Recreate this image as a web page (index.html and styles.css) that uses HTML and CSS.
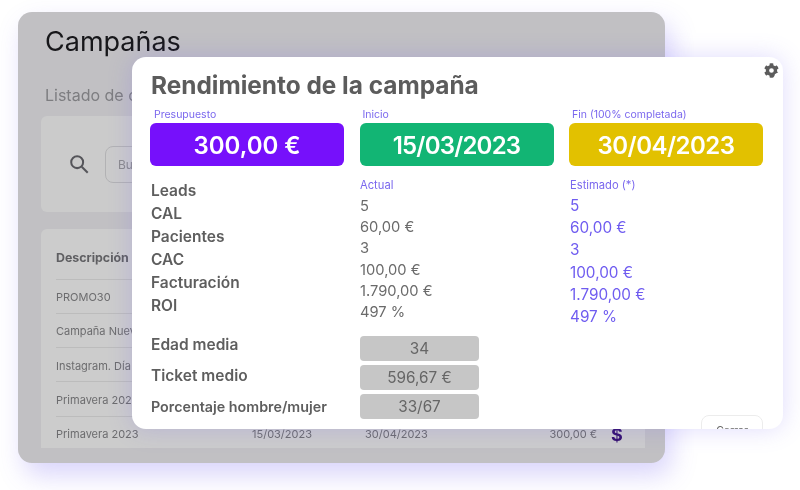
FILE: index.html
```html
<!DOCTYPE html>
<html lang="es">
<head>
<meta charset="utf-8">
<title>Campañas</title>
<link rel="stylesheet" href="styles.css">
</head>
<body>
<main class="stage">
  <section class="window">
    <h1 class="page-title">Campañas</h1>
    <p class="page-sub">Listado de campañas</p>
    <div class="search-card">
      <svg class="search-icon" viewBox="0 0 24 24" aria-hidden="true"><circle cx="10" cy="10" r="6.5"/><path d="M15 15l6.5 6.5"/></svg>
      <div class="search-input">Buscar</div>
    </div>
    <div class="table-card">
      <div class="row head"><span class="c-desc">Descripción</span></div>
      <div class="row"><span class="c-desc">PROMO30</span></div>
      <div class="row"><span class="c-desc">Campaña Nueva</span></div>
      <div class="row"><span class="c-desc">Instagram. Día</span></div>
      <div class="row"><span class="c-desc">Primavera 2023</span></div>
      <div class="row">
        <span class="c-desc">Primavera 2023</span>
        <span class="c-start">15/03/2023</span>
        <span class="c-end">30/04/2023</span>
        <span class="c-amount">300,00 €</span>
        <span class="c-icon">$</span>
      </div>
    </div>
  </section>

  <section class="modal">
    <svg class="gear" viewBox="0 0 512 512" aria-hidden="true"><path d="M487 316l-43-25a195 195 0 0 0 0-70l43-25c5-3 7-9 6-14-11-36-30-68-55-95-4-4-10-5-15-2l-43 25a190 190 0 0 0-61-35V25c0-6-4-11-9-12-37-8-75-8-110 0-5 1-9 6-9 12v50a196 196 0 0 0-61 35L87 85c-5-3-11-2-15 2-25 27-44 59-55 95-2 5 1 11 6 14l43 25a195 195 0 0 0 0 70l-43 25c-5 3-7 9-6 14 11 36 30 68 55 95 4 4 10 5 15 2l43-25a190 190 0 0 0 61 35v50c0 6 4 11 9 12 37 8 75 8 110 0 5-1 9-6 9-12v-50a196 196 0 0 0-61 35l43 25c5 3 11 2 15-2 25-27 44-59 55-95 2-5-1-11-6-14zM255 336a80 80 0 1 1 0-160 80 80 0 0 1 0 160z"/></svg>
    <h2 class="modal-title">Rendimiento de la campaña</h2>
    <div class="stats">
      <div class="stat">
        <div class="stat-label l1">Presupuesto</div>
        <div class="stat-box purple">300,00 €</div>
      </div>
      <div class="stat">
        <div class="stat-label l2">Inicio</div>
        <div class="stat-box green">15/03/2023</div>
      </div>
      <div class="stat">
        <div class="stat-label l3">Fin (100% completada)</div>
        <div class="stat-box yellow">30/04/2023</div>
      </div>
    </div>
    <div class="metrics">
      <ul class="names">
        <li>Leads</li><li>CAL</li><li>Pacientes</li><li>CAC</li><li>Facturación</li><li>ROI</li>
      </ul>
      <div class="col">
        <div class="col-label">Actual</div>
        <ul class="actual">
          <li>5</li><li>60,00 €</li><li>3</li><li>100,00 €</li><li>1.790,00 €</li><li>497 %</li>
        </ul>
      </div>
      <div class="col col-est">
        <div class="col-label">Estimado (*)</div>
        <ul class="estimated">
          <li>5</li><li>60,00 €</li><li>3</li><li>100,00 €</li><li>1.790,00 €</li><li>497 %</li>
        </ul>
      </div>
    </div>
    <div class="extras">
      <ul class="extra-names">
        <li>Edad media</li>
        <li>Ticket medio</li>
        <li class="small">Porcentaje hombre/mujer</li>
      </ul>
      <ul class="extra-values">
        <li>34</li>
        <li>596,67 €</li>
        <li>33/67</li>
      </ul>
    </div>
    <div class="footer"><button class="close" type="button">Cerrar</button></div>
  </section>
</main>
</body>
</html>
```
FILE: styles.css
```css
* { box-sizing: border-box; }
html, body { margin: 0; padding: 0; background: #fff; }
body { font-family: Inter, "Noto Sans", sans-serif; width: 800px; height: 490px; overflow: hidden; }
ul { list-style: none; margin: 0; padding: 0; }
h1, h2, p { margin: 0; }

.stage { position: relative; width: 800px; height: 490px; padding: 12px 0 0 18px; filter: blur(.3px); }

.window {
  width: 647px; height: 451px;
  background: #c1c0c3; border-radius: 14px;
  padding: 13px 23px 0;
  box-shadow: 6px 12px 26px rgba(110, 90, 240, .26);
  overflow: hidden;
}
.page-title { font-size: 27px; font-weight: 400; line-height: 34px; color: #17171a; padding-left: 4px; }
.page-sub { font-size: 16px; line-height: 22px; margin-top: 25px; padding-left: 4px; color: #7d7d80; white-space: nowrap; }

.search-card {
  height: 96px; margin-top: 10px; border-radius: 6px; background: #cbcbcb;
  display: flex; align-items: center; padding: 0 0 0 27px;
}
.search-icon { width: 22px; height: 22px; fill: none; stroke: #55555a; stroke-width: 2.2; }
.search-input {
  margin-left: 15px; width: 200px; height: 37px; border: 1px solid #b2b2b4; border-radius: 8px;
  font-size: 12px; line-height: 35px; padding-left: 12px; color: #8a8a8c;
}

.table-card {
  height: 219px; margin-top: 17px; background: #cccccc; border-radius: 6px 6px 0 0;
  padding: 0 15px; width: 604px; font-size: 11px; color: #6c6c6e;
}
.row { display: flex; align-items: center; height: 34.25px; padding-top: 2px; border-top: 1px solid #bcbcbc; white-space: nowrap; }
.row.head { height: 49.5px; border-top: 0; font-weight: 700; font-size: 12.4px; color: #5f5f62; padding-top: 8px; }
.c-desc { width: 196px; }
.c-start { width: 113px; }
.c-end { width: 136px; }
.c-amount { width: 96px; text-align: right; }
.c-icon { margin-left: 14px; font-size: 18px; font-weight: 700; color: #34106f; }

.modal {
  position: absolute; left: 132px; top: 57px;
  width: 651px; height: 372px; overflow: hidden;
  background: #fff; border-radius: 14px;
  padding: 13px 20px 0 18px;
  box-shadow: 0 0 24px rgba(110, 90, 240, .22);
  color: #5e5e5e;
}
.gear { position: absolute; right: 4px; top: 6px; width: 15px; height: 15px; fill: #5c5c5c; }
.modal-title { font-size: 24.4px; line-height: 30px; font-weight: 700; color: #5c5c5c; padding-left: 1px; }

.stats { display: grid; grid-template-columns: repeat(3, 194px); column-gap: 15.5px; margin-top: 7px; }
.stat-label { font-size: 10.5px; line-height: 15px; color: #7b68ee; white-space: nowrap; }
.l1 { padding-left: 4px; }
.l2 { padding-left: 3px; }
.l3 { padding-left: 3px; }
.stat-box {
  height: 43px; border-radius: 6px; color: #fff; margin-top: 1px;
  font-size: 24px; line-height: 45px; font-weight: 600; text-align: center;
}
.purple { background: #7610fb; }
.green { background: #12b574; letter-spacing: -.8px; }
.yellow { background: #e2c100; letter-spacing: -.5px; }

.metrics { display: grid; grid-template-columns: 194.5px 194px 194px; column-gap: 15.5px; margin-top: 12px; }
.names { font-size: 15.5px; font-weight: 600; padding: 1px 0 0 1px; }
.names li { height: 23px; line-height: 23px; }
.col-label { font-size: 11.2px; line-height: 15px; color: #7b68ee; }
.col-est { padding-left: .5px; }
.actual { font-size: 14.7px; margin-top: 3px; color: #6a6a6a; }
.actual li { height: 21.2px; line-height: 21.2px; }
.estimated { font-size: 15.3px; margin-top: 2px; color: #6f5cf0; }
.estimated li { height: 22.2px; line-height: 22.2px; }

.extras { margin-top: 8px; display: flex; align-items: flex-start; }
.extra-names { width: 210px; flex: none; font-size: 15.5px; font-weight: 600; padding-left: 1px; margin-top: -7px; }
.extra-names li { height: 31px; line-height: 31px; white-space: nowrap; }
.extra-names .small { font-size: 14.3px; }
.extra-values { width: 119px; display: flex; flex-direction: column; gap: 4px; }
.extra-values li {
  height: 25px; line-height: 25px; background: #c6c6c6; border-radius: 4px;
  text-align: center; font-size: 15.3px; color: #666;
}
.footer { display: flex; justify-content: flex-end; margin-top: -7px; }
.close {
  width: 62px; height: 30px; border: 1px solid #ececec; border-radius: 8px; background: #fff;
  font: 400 10.5px Inter, sans-serif; color: #666;
}
```
